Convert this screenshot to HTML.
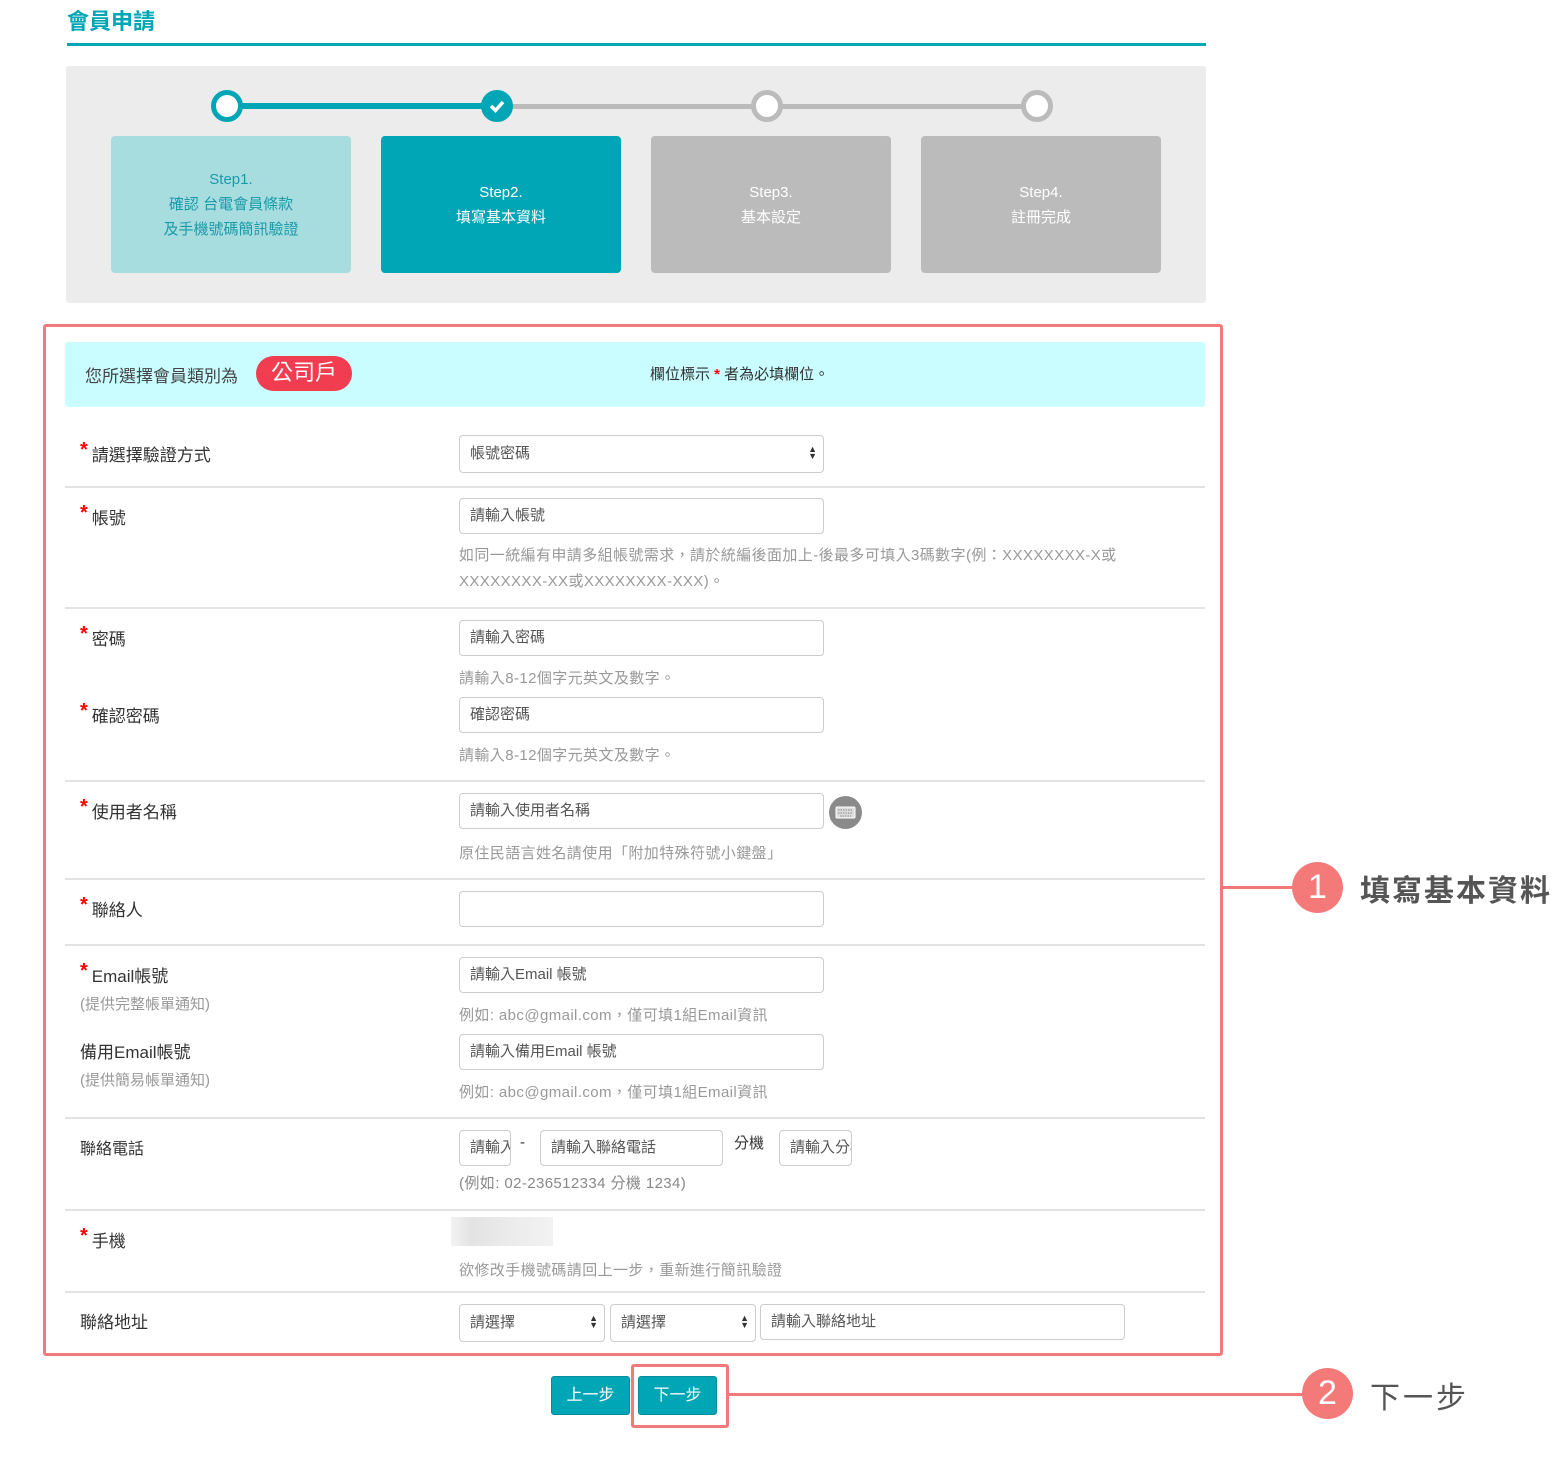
<!DOCTYPE html>
<html><head><meta charset="utf-8"><style>
*{box-sizing:border-box;margin:0;padding:0}
body{width:1561px;height:1458px;background:#fff;position:relative;font-family:"Liberation Sans","Noto Sans CJK TC",sans-serif;color:#333;overflow:hidden}
.a{position:absolute}
.lbl{position:absolute;left:80px;font-size:17px;color:#333;white-space:nowrap}
.st{color:#f00;margin-right:4px;font-size:20px;font-weight:bold;vertical-align:top;line-height:18px}
.inp{position:absolute;height:36px;border:1px solid #ccc;border-radius:4px;background:#fff;font-size:15px;color:#555;padding:0 10px;line-height:34px;white-space:nowrap;overflow:hidden}
.help{position:absolute;left:459px;font-size:15px;color:#999;white-space:nowrap;letter-spacing:0.4px}
.sep{position:absolute;left:65px;width:1140px;height:2px;background:#e3e3e3}
.sub{position:absolute;left:80px;font-size:15px;color:#999}
.arr{position:absolute;right:6px;top:10px;font-size:9px;line-height:7px;color:#333}
.box{position:absolute;top:136px;width:240px;height:137px;border-radius:4px;text-align:center;font-size:15px;line-height:25px;display:flex;align-items:center;justify-content:center}
.cir{position:absolute;top:90px;width:32px;height:32px;border-radius:50%;background:#fff;border:5px solid #bbb}
.btn{position:absolute;top:1376px;height:39px;width:79px;background:#00a6b5;border:1px solid #078c98;border-radius:3px;color:#fff;font-size:16px;text-align:center;line-height:37px}
</style></head><body>
<div class="a" style="left:67px;top:4px;font-size:22px;font-weight:bold;color:#00a6b5">會員申請</div>
<div class="a" style="left:67px;top:43px;width:1139px;height:3px;background:#00a6b5"></div>
<div class="a" style="left:66px;top:66px;width:1140px;height:237px;background:#ececec;border-radius:3px"></div>
<div class="a" style="left:227px;top:103px;width:270px;height:6px;background:#00a6b5"></div>
<div class="a" style="left:497px;top:104px;width:540px;height:5px;background:#bbb"></div>
<div class="cir" style="left:211px;border-color:#00a6b5"></div>
<div class="cir" style="left:481px;border-color:#00a6b5;background:#00a6b5"><svg width="22" height="22" viewBox="0 0 22 22" style="position:absolute;left:0;top:0"><path d="M5 11 L9.5 15.5 L17 7" stroke="#fff" stroke-width="3.5" fill="none"/></svg></div>
<div class="cir" style="left:751px"></div>
<div class="cir" style="left:1021px"></div>
<div class="box" style="left:111px;background:#a8dde0;color:#1a9aa8">Step1.<br>確認 台電會員條款<br>及手機號碼簡訊驗證</div>
<div class="box" style="left:381px;background:#00a6b5;color:#fff">Step2.<br>填寫基本資料</div>
<div class="box" style="left:651px;background:#bbb;color:#fff">Step3.<br>基本設定</div>
<div class="box" style="left:921px;background:#bbb;color:#fff">Step4.<br>註冊完成</div>

<div class="a" style="left:43px;top:324px;width:1180px;height:1032px;border:3px solid #f47a7a;border-radius:3px"></div>
<div class="a" style="left:65px;top:342px;width:1140px;height:65px;background:#c9fdff;border-radius:3px"></div>
<div class="a" style="left:85px;top:362px;font-size:17px;color:#444">您所選擇會員類別為</div>
<div class="a" style="left:256px;top:356px;width:96px;height:35px;border-radius:18px;background:#f23d50;color:#fff;font-size:22px;text-align:center;line-height:33px">公司戶</div>
<div class="a" style="left:650px;top:363px;font-size:15px;color:#333">欄位標示 <span style="color:#f00;font-weight:bold">*</span> 者為必填欄位。</div>

<div class="lbl" style="top:441px"><span class="st">*</span>請選擇驗證方式</div>
<div class="inp" style="left:459px;top:435px;width:365px;height:38px;line-height:36px">帳號密碼<span class="arr">▲<br>▼</span></div>
<div class="sep" style="top:486px"></div>

<div class="lbl" style="top:504px"><span class="st">*</span>帳號</div>
<div class="inp" style="left:459px;top:498px;width:365px">請輸入帳號</div>
<div class="help" style="top:543px;line-height:26px">如同一統編有申請多組帳號需求，請於統編後面加上-後最多可填入3碼數字(例：XXXXXXXX-X或<br>XXXXXXXX-XX或XXXXXXXX-XXX)。</div>
<div class="sep" style="top:607px"></div>

<div class="lbl" style="top:625px"><span class="st">*</span>密碼</div>
<div class="inp" style="left:459px;top:620px;width:365px">請輸入密碼</div>
<div class="help" style="top:667px">請輸入8-12個字元英文及數字。</div>
<div class="lbl" style="top:702px"><span class="st">*</span>確認密碼</div>
<div class="inp" style="left:459px;top:697px;width:365px">確認密碼</div>
<div class="help" style="top:744px">請輸入8-12個字元英文及數字。</div>
<div class="sep" style="top:780px"></div>

<div class="lbl" style="top:798px"><span class="st">*</span>使用者名稱</div>
<div class="inp" style="left:459px;top:793px;width:365px">請輸入使用者名稱</div>
<div class="a" style="left:829px;top:796px;width:33px;height:33px;border-radius:50%;background:#8a8a8a"><svg width="33" height="33" viewBox="0 0 33 33"><rect x="7" y="11" width="19" height="11" rx="1" fill="#ddd" stroke="#fff" stroke-width="1"/><path d="M9 14h15M9 17h15M11 20h11" stroke="#888" stroke-width="1" stroke-dasharray="1.5 1"/></svg></div>
<div class="help" style="top:842px">原住民語言姓名請使用「附加特殊符號小鍵盤」</div>
<div class="sep" style="top:878px"></div>

<div class="lbl" style="top:896px"><span class="st">*</span>聯絡人</div>
<div class="inp" style="left:459px;top:891px;width:365px"></div>
<div class="sep" style="top:944px"></div>

<div class="lbl" style="top:962px"><span class="st">*</span>Email帳號</div>
<div class="sub" style="top:993px">(提供完整帳單通知)</div>
<div class="inp" style="left:459px;top:957px;width:365px">請輸入Email 帳號</div>
<div class="help" style="top:1004px">例如: abc@gmail.com，僅可填1組Email資訊</div>
<div class="lbl" style="top:1038px">備用Email帳號</div>
<div class="sub" style="top:1069px">(提供簡易帳單通知)</div>
<div class="inp" style="left:459px;top:1034px;width:365px">請輸入備用Email 帳號</div>
<div class="help" style="top:1081px">例如: abc@gmail.com，僅可填1組Email資訊</div>
<div class="sep" style="top:1117px"></div>

<div class="lbl" style="top:1135px;font-size:16px">聯絡電話</div>
<div class="inp" style="left:459px;top:1130px;width:52px">請輸入</div>
<div class="a" style="left:520px;top:1134px;font-size:15px">-</div>
<div class="inp" style="left:540px;top:1130px;width:183px">請輸入聯絡電話</div>
<div class="a" style="left:734px;top:1132px;font-size:15px;color:#333">分機</div>
<div class="inp" style="left:779px;top:1130px;width:73px;padding-right:6px">請輸入分機</div>
<div class="help" style="top:1172px;color:#888">(例如: 02-236512334 分機 1234)</div>
<div class="sep" style="top:1209px"></div>

<div class="lbl" style="top:1227px"><span class="st">*</span>手機</div>
<div class="a" style="left:451px;top:1217px;width:102px;height:29px;background:linear-gradient(90deg,#f3f3f3,#e3e3e3 20%,#ececec 60%,#f2f2f2)"></div>
<div class="help" style="top:1259px">欲修改手機號碼請回上一步，重新進行簡訊驗證</div>
<div class="sep" style="top:1291px"></div>

<div class="lbl" style="top:1308px">聯絡地址</div>
<div class="inp" style="left:459px;top:1304px;width:146px;height:38px;line-height:36px">請選擇<span class="arr">▲<br>▼</span></div>
<div class="inp" style="left:610px;top:1304px;width:146px;height:38px;line-height:36px">請選擇<span class="arr">▲<br>▼</span></div>
<div class="inp" style="left:760px;top:1304px;width:365px">請輸入聯絡地址</div>

<div class="btn" style="left:551px">上一步</div>
<div class="a" style="left:631px;top:1364px;width:98px;height:64px;border:3px solid #f47a7a;border-radius:3px"></div>
<div class="btn" style="left:638px">下一步</div>

<div class="a" style="left:1222px;top:886px;width:78px;height:3px;background:#f47a7a"></div>
<div class="a" style="left:1292px;top:862px;width:51px;height:51px;border-radius:50%;background:#f47a7a;color:#fff;font-size:34px;text-align:center;line-height:50px">1</div>
<div class="a" style="left:1360px;top:866px;font-size:30px;font-weight:bold;color:#555;letter-spacing:2px">填寫基本資料</div>

<div class="a" style="left:728px;top:1393px;width:580px;height:3px;background:#f47a7a"></div>
<div class="a" style="left:1302px;top:1368px;width:51px;height:51px;border-radius:50%;background:#f47a7a;color:#fff;font-size:34px;text-align:center;line-height:50px">2</div>
<div class="a" style="left:1370px;top:1373px;font-size:30px;color:#555;letter-spacing:3px">下一步</div>
</body></html>
